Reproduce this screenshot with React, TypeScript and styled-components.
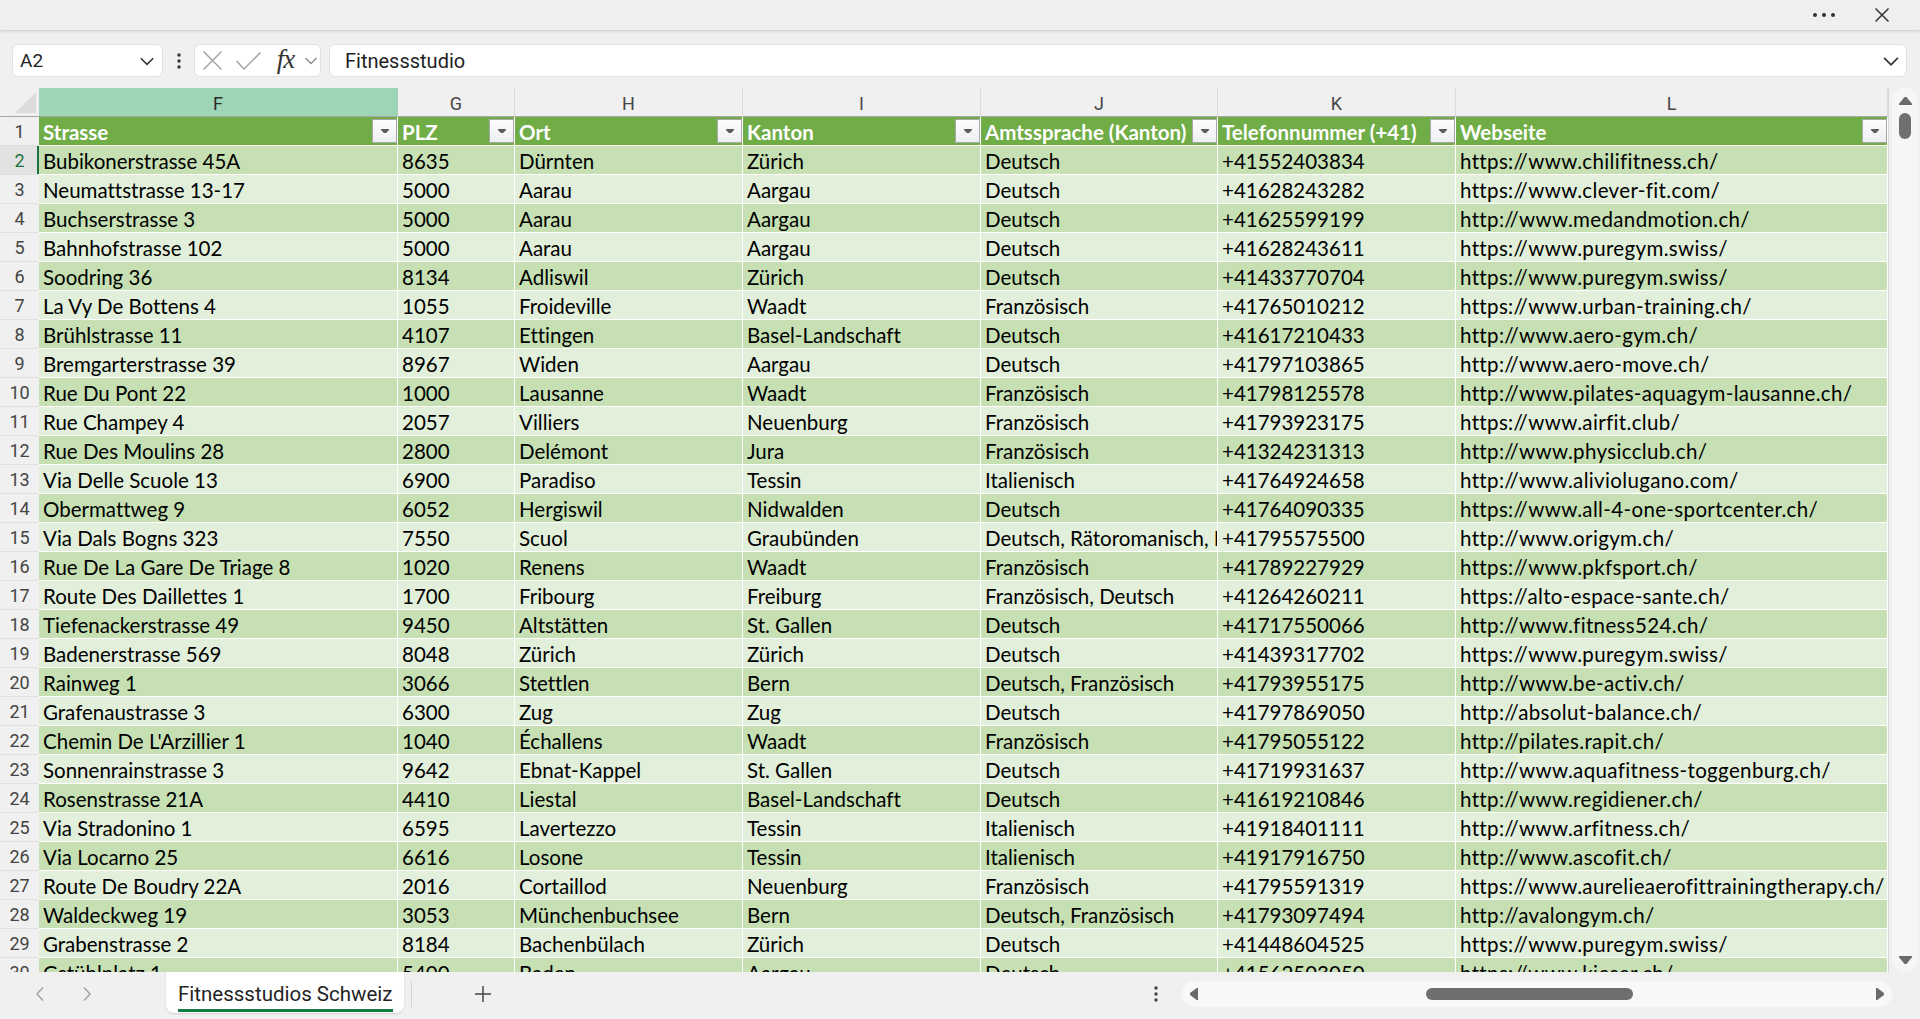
import React from "react";
import styled, { createGlobalStyle } from "styled-components";

const GlobalStyle = createGlobalStyle`
  html, body { margin: 0; padding: 0; background: #f0f0f0; overflow: hidden; }
  body { font-family: "Lato", "Liberation Sans", sans-serif; }
  * { box-sizing: border-box; }
`;

const COLS = "39px 359px 117px 228px 238px 237px 238px 432px";

const Page = styled.div`
  width: 1920px;
  height: 1019px;
  display: flex;
  flex-direction: column;
  background: #f0f0f0;
`;

const TitleBar = styled.div`
  height: 30px;
  flex: none;
  display: flex;
  justify-content: flex-end;
  align-items: center;
  padding-right: 30px;
  gap: 38px;
  background: #efefef;
  box-shadow: 0 1px 3px rgba(0, 0, 0, 0.18);
  position: relative;
  z-index: 1;
`;

const PlainIcon = styled.span`
  display: flex;
  align-items: center;
  justify-content: center;
  color: #333;
`;

const FormulaBar = styled.div`
  height: 58px;
  flex: none;
  display: flex;
  align-items: flex-start;
  padding: 14px 13px 0 12px;
`;

const Box = styled.div`
  height: 33px;
  background: #fff;
  border: 1px solid #e1e1e1;
  border-radius: 6px;
  display: flex;
  align-items: center;
`;

const NameBox = styled(Box)`
  width: 151px;
  justify-content: space-between;
  padding: 0 6px 0 7px;
`;

const UiText = styled.span<{ $size?: number }>`
  font-family: "Roboto", "Liberation Sans", sans-serif;
  font-size: ${(p) => p.$size ?? 19}px;
  color: #1f1f1f;
`;

const DotsButton = styled.div`
  width: 31px;
  height: 33px;
  display: flex;
  align-items: center;
  justify-content: center;
`;

const FxGroup = styled(Box)`
  width: 127px;
  padding-left: 0;
`;

const FxSlot = styled.span<{ $w: number }>`
  width: ${(p) => p.$w}px;
  flex: none;
  display: flex;
  align-items: center;
  justify-content: center;
`;

const FxText = styled.span`
  font-family: "Liberation Serif", "DejaVu Serif", serif;
  font-style: italic;
  font-size: 27px;
  color: #333;
  line-height: 1;
  letter-spacing: -1px;
  margin-top: -2px;
`;

const FormulaInput = styled(Box)`
  flex: 1;
  margin-left: 8px;
  justify-content: space-between;
  padding: 0 5px 0 15px;
`;

const SheetArea = styled.div`
  flex: 1;
  min-height: 0;
  display: flex;
`;

const Grid = styled.div`
  width: 1889px;
  flex: none;
  overflow: hidden;
  display: flex;
  flex-direction: column;
  border-right: 1px solid #d6d6d6;
`;

const Row = styled.div`
  display: grid;
  grid-template-columns: ${COLS};
  height: 29px;
  flex: none;
`;

const Corner = styled.div`
  background: #f0f0f0;
  border-bottom: 1px solid #a8a8a8;
  display: flex;
  align-items: flex-end;
  justify-content: flex-end;
  padding: 0 3px 3px 0;
`;

const ColHeader = styled.div<{ $selected?: boolean }>`
  display: flex;
  align-items: center;
  justify-content: center;
  font-family: "Roboto", "Liberation Sans", sans-serif;
  font-size: 18px;
  color: ${(p) => (p.$selected ? "#2b2b2b" : "#464646")};
  background: ${(p) => (p.$selected ? "#9fd5b7" : "#f0f0f0")};
  border-right: 1px solid ${(p) => (p.$selected ? "#9fd5b7" : "#dcdcdc")};
  border-bottom: 1px solid #a8a8a8;
  padding-top: 2px;
`;

const RowHeader = styled.div<{ $active?: boolean }>`
  display: flex;
  align-items: center;
  justify-content: center;
  font-family: "Roboto", "Liberation Sans", sans-serif;
  font-size: 18px;
  color: ${(p) => (p.$active ? "#1e7145" : "#444")};
  background: ${(p) => (p.$active ? "#e2e2e2" : "#f0f0f0")};
  border-bottom: 1px solid #e0e0e0;
  box-shadow: ${(p) => (p.$active ? "inset -2px 0 0 #1e7145" : "none")};
  padding-top: 1px;
`;

const Cell = styled.div<{ $band: "head" | "dark" | "light"; $spaced?: boolean }>`
  display: flex;
  align-items: center;
  min-width: 0;
  overflow: hidden;
  white-space: nowrap;
  padding: 1px 0 0 4px;
  font-size: 20.5px;
  font-variant-ligatures: none;
  letter-spacing: ${(p) => (p.$spaced ? "0.35px" : "0")};
  color: ${(p) => (p.$band === "head" ? "#fff" : "#000")};
  font-weight: ${(p) => (p.$band === "head" ? 700 : 400)};
  background: ${(p) =>
    p.$band === "head" ? "#70ad47" : p.$band === "dark" ? "#c6e0b4" : "#e2efda"};
  border-right: 1px solid #fff;
  border-bottom: 1px solid #fff;
`;

const HeadLabel = styled.span`
  flex: 1;
  min-width: 0;
  overflow: hidden;
`;

const FilterButton = styled.span`
  width: 25px;
  height: 24px;
  flex: none;
  margin: 0 0 1px 2px;
  display: flex;
  align-items: center;
  justify-content: center;
  background: linear-gradient(#fdfdfd, #eceef2);
  border: 1px solid #a9a9a9;
`;

const VScroll = styled.div`
  width: 26px;
  margin-left: 3px;
  background: #f6f6f6;
  border-radius: 13px;
  display: flex;
  flex-direction: column;
  align-items: center;
  padding: 9px 0 8px;
`;

const VThumb = styled.div`
  width: 12px;
  height: 26px;
  border-radius: 6px;
  background: #707070;
  margin-top: 8px;
`;

const Spacer = styled.div`
  flex: 1;
`;

const TabBar = styled.div`
  height: 47px;
  flex: none;
  display: flex;
  align-items: center;
  padding: 0 28px 3px 28px;
`;

const NavButton = styled.span`
  width: 24px;
  height: 24px;
  display: flex;
  align-items: center;
  justify-content: center;
  & + & {
    margin-left: 23px;
  }
`;

const SheetTab = styled.div`
  align-self: flex-start;
  height: 41px;
  margin-left: 67px;
  padding: 0 11px 0 12px;
  background: #fff;
  border-radius: 0 0 8px 8px;
  box-shadow: 0 1px 2px rgba(0, 0, 0, 0.14);
  display: flex;
  align-items: center;
`;

const TabLabel = styled.span`
  font-family: "Roboto", "Liberation Sans", sans-serif;
  font-size: 20.5px;
  color: #242424;
  padding: 4px 0 3px;
  border-bottom: 3px solid #107c41;
  margin-top: 4px;
  line-height: 24px;
`;

const TabDivider = styled.span`
  width: 1px;
  height: 26px;
  background: #d2d2d2;
  margin-left: 7px;
`;

const AddButton = styled.span`
  width: 30px;
  height: 30px;
  margin-left: 56px;
  display: flex;
  align-items: center;
  justify-content: center;
`;

const TabDots = styled.span`
  width: 26px;
  display: flex;
  justify-content: center;
  margin-right: 13px;
`;

const HScroll = styled.div`
  width: 710px;
  height: 26px;
  border-radius: 13px;
  background: #f8f8f8;
  display: flex;
  align-items: center;
  padding: 0 8px;
`;

const HTrack = styled.div`
  flex: 1;
  display: flex;
  align-items: center;
`;

const HThumb = styled.div<{ $offset: number; $len: number }>`
  height: 12px;
  width: ${(p) => p.$len}px;
  margin-left: ${(p) => p.$offset}px;
  border-radius: 6px;
  background: #6e6e6e;
`;

type Rec = [string, string, string, string, string, string, string];

const HEAD: Rec = [
  "Strasse",
  "PLZ",
  "Ort",
  "Kanton",
  "Amtssprache (Kanton)",
  "Telefonnummer (+41)",
  "Webseite",
];

const DATA: Rec[] = [
  ["Bubikonerstrasse 45A", "8635", "Dürnten", "Zürich", "Deutsch", "+41552403834", "https://www.chilifitness.ch/"],
  ["Neumattstrasse 13-17", "5000", "Aarau", "Aargau", "Deutsch", "+41628243282", "https://www.clever-fit.com/"],
  ["Buchserstrasse 3", "5000", "Aarau", "Aargau", "Deutsch", "+41625599199", "http://www.medandmotion.ch/"],
  ["Bahnhofstrasse 102", "5000", "Aarau", "Aargau", "Deutsch", "+41628243611", "https://www.puregym.swiss/"],
  ["Soodring 36", "8134", "Adliswil", "Zürich", "Deutsch", "+41433770704", "https://www.puregym.swiss/"],
  ["La Vy De Bottens 4", "1055", "Froideville", "Waadt", "Französisch", "+41765010212", "https://www.urban-training.ch/"],
  ["Brühlstrasse 11", "4107", "Ettingen", "Basel-Landschaft", "Deutsch", "+41617210433", "http://www.aero-gym.ch/"],
  ["Bremgarterstrasse 39", "8967", "Widen", "Aargau", "Deutsch", "+41797103865", "http://www.aero-move.ch/"],
  ["Rue Du Pont 22", "1000", "Lausanne", "Waadt", "Französisch", "+41798125578", "http://www.pilates-aquagym-lausanne.ch/"],
  ["Rue Champey 4", "2057", "Villiers", "Neuenburg", "Französisch", "+41793923175", "https://www.airfit.club/"],
  ["Rue Des Moulins 28", "2800", "Delémont", "Jura", "Französisch", "+41324231313", "http://www.physicclub.ch/"],
  ["Via Delle Scuole 13", "6900", "Paradiso", "Tessin", "Italienisch", "+41764924658", "http://www.aliviolugano.com/"],
  ["Obermattweg 9", "6052", "Hergiswil", "Nidwalden", "Deutsch", "+41764090335", "https://www.all-4-one-sportcenter.ch/"],
  ["Via Dals Bogns 323", "7550", "Scuol", "Graubünden", "Deutsch, Rätoromanisch, Italienisch", "+41795575500", "http://www.origym.ch/"],
  ["Rue De La Gare De Triage 8", "1020", "Renens", "Waadt", "Französisch", "+41789227929", "https://www.pkfsport.ch/"],
  ["Route Des Daillettes 1", "1700", "Fribourg", "Freiburg", "Französisch, Deutsch", "+41264260211", "https://alto-espace-sante.ch/"],
  ["Tiefenackerstrasse 49", "9450", "Altstätten", "St. Gallen", "Deutsch", "+41717550066", "http://www.fitness524.ch/"],
  ["Badenerstrasse 569", "8048", "Zürich", "Zürich", "Deutsch", "+41439317702", "https://www.puregym.swiss/"],
  ["Rainweg 1", "3066", "Stettlen", "Bern", "Deutsch, Französisch", "+41793955175", "http://www.be-activ.ch/"],
  ["Grafenaustrasse 3", "6300", "Zug", "Zug", "Deutsch", "+41797869050", "http://absolut-balance.ch/"],
  ["Chemin De L'Arzillier 1", "1040", "Échallens", "Waadt", "Französisch", "+41795055122", "http://pilates.rapit.ch/"],
  ["Sonnenrainstrasse 3", "9642", "Ebnat-Kappel", "St. Gallen", "Deutsch", "+41719931637", "http://www.aquafitness-toggenburg.ch/"],
  ["Rosenstrasse 21A", "4410", "Liestal", "Basel-Landschaft", "Deutsch", "+41619210846", "http://www.regidiener.ch/"],
  ["Via Stradonino 1", "6595", "Lavertezzo", "Tessin", "Italienisch", "+41918401111", "http://www.arfitness.ch/"],
  ["Via Locarno 25", "6616", "Losone", "Tessin", "Italienisch", "+41917916750", "http://www.ascofit.ch/"],
  ["Route De Boudry 22A", "2016", "Cortaillod", "Neuenburg", "Französisch", "+41795591319", "https://www.aurelieaerofittrainingtherapy.ch/"],
  ["Waldeckweg 19", "3053", "Münchenbuchsee", "Bern", "Deutsch, Französisch", "+41793097494", "http://avalongym.ch/"],
  ["Grabenstrasse 2", "8184", "Bachenbülach", "Zürich", "Deutsch", "+41448604525", "https://www.puregym.swiss/"],
  ["Gstühlplatz 1", "5400", "Baden", "Aargau", "Deutsch", "+41562503050", "https://www.kieser.ch/"],
];

const LETTERS = ["F", "G", "H", "I", "J", "K", "L"];

const Chevron = ({ size = 14, color = "#333", w = 1.4 }: { size?: number; color?: string; w?: number }) => (
  <svg width={size} height={size} viewBox="0 0 16 16">
    <polyline points="2.5,5.5 8,11 13.5,5.5" fill="none" stroke={color} strokeWidth={w} />
  </svg>
);

const Tri = ({ dir, w, h, color }: { dir: "up" | "down" | "left" | "right"; w: number; h: number; color: string }) => {
  const pts =
    dir === "up"
      ? `0,${h} ${w / 2},0 ${w},${h}`
      : dir === "down"
      ? `0,0 ${w},0 ${w / 2},${h}`
      : dir === "left"
      ? `${w},0 0,${h / 2} ${w},${h}`
      : `0,0 ${w},${h / 2} 0,${h}`;
  return (
    <svg width={w} height={h} viewBox={`0 0 ${w} ${h}`}>
      <polygon points={pts} fill={color} strokeLinejoin="round" stroke={color} strokeWidth={1.5} />
    </svg>
  );
};

const VDots = ({ color = "#333" }: { color?: string }) => (
  <svg width="6" height="18" viewBox="0 0 6 18">
    <circle cx="3" cy="3" r="1.7" fill={color} />
    <circle cx="3" cy="9" r="1.7" fill={color} />
    <circle cx="3" cy="15" r="1.7" fill={color} />
  </svg>
);

export default function App() {
  return (
    <Page>
      <GlobalStyle />
      <TitleBar>
        <PlainIcon>
          <svg width="24" height="6" viewBox="0 0 24 6">
            <circle cx="3" cy="3" r="2" fill="#333" />
            <circle cx="12" cy="3" r="2" fill="#333" />
            <circle cx="21" cy="3" r="2" fill="#333" />
          </svg>
        </PlainIcon>
        <PlainIcon>
          <svg width="16" height="16" viewBox="0 0 16 16">
            <path d="M1.5 1.5 L14.5 14.5 M14.5 1.5 L1.5 14.5" stroke="#333" strokeWidth="1.5" />
          </svg>
        </PlainIcon>
      </TitleBar>

      <FormulaBar>
        <NameBox>
          <UiText>A2</UiText>
          <Chevron size={18} />
        </NameBox>
        <DotsButton>
          <VDots />
        </DotsButton>
        <FxGroup>
          <FxSlot $w={34}>
            <svg width="21" height="21" viewBox="0 0 21 21">
              <path d="M1.5 1.5 L19.5 19.5 M19.5 1.5 L1.5 19.5" stroke="#a3a3a3" strokeWidth="1.5" />
            </svg>
          </FxSlot>
          <FxSlot $w={39}>
            <svg width="27" height="20" viewBox="0 0 27 20">
              <polyline points="1.5,10 9,18 25.5,1.5" fill="none" stroke="#a3a3a3" strokeWidth="1.5" />
            </svg>
          </FxSlot>
          <FxSlot $w={35}>
            <FxText>fx</FxText>
          </FxSlot>
          <FxSlot $w={16}>
            <Chevron size={17} color="#8a8a8a" w={1.3} />
          </FxSlot>
        </FxGroup>
        <FormulaInput>
          <UiText $size={20}>Fitnessstudio</UiText>
          <Chevron size={20} />
        </FormulaInput>
      </FormulaBar>

      <SheetArea>
        <Grid>
          <Row>
            <Corner>
              <svg width="21" height="21" viewBox="0 0 21 21">
                <polygon points="21,0 21,21 0,21" fill="#dcdcdc" />
              </svg>
            </Corner>
            {LETTERS.map((l, i) => (
              <ColHeader key={l} $selected={i === 0}>
                {l}
              </ColHeader>
            ))}
          </Row>
          <Row>
            <RowHeader>1</RowHeader>
            {HEAD.map((h) => (
              <Cell key={h} $band="head">
                <HeadLabel>{h}</HeadLabel>
                <FilterButton>
                  <Tri dir="down" w={8} h={4} color="#5c5c5c" />
                </FilterButton>
              </Cell>
            ))}
          </Row>
          {DATA.map((r, idx) => {
            const n = idx + 2;
            const band = n % 2 === 0 ? "dark" : "light";
            return (
              <Row key={n}>
                <RowHeader $active={n === 2}>{n}</RowHeader>
                {r.map((v, j) => (
                  <Cell key={j} $band={band} $spaced={j === 6}>
                    {v}
                  </Cell>
                ))}
              </Row>
            );
          })}
        </Grid>
        <VScroll>
          <Tri dir="up" w={13} h={8} color="#6b6b6b" />
          <VThumb />
          <Spacer />
          <Tri dir="down" w={13} h={8} color="#6b6b6b" />
        </VScroll>
      </SheetArea>

      <TabBar>
        <NavButton>
          <svg width="10" height="16" viewBox="0 0 10 16">
            <polyline points="8,1.5 2,8 8,14.5" fill="none" stroke="#a0a0a0" strokeWidth="1.4" />
          </svg>
        </NavButton>
        <NavButton>
          <svg width="10" height="16" viewBox="0 0 10 16">
            <polyline points="2,1.5 8,8 2,14.5" fill="none" stroke="#a0a0a0" strokeWidth="1.4" />
          </svg>
        </NavButton>
        <SheetTab>
          <TabLabel>Fitnessstudios Schweiz</TabLabel>
        </SheetTab>
        <TabDivider />
        <AddButton>
          <svg width="18" height="18" viewBox="0 0 18 18">
            <path d="M9 1 V17 M1 9 H17" stroke="#444" strokeWidth="1.5" />
          </svg>
        </AddButton>
        <Spacer />
        <TabDots>
          <VDots color="#444" />
        </TabDots>
        <HScroll>
          <Tri dir="left" w={8} h={12} color="#6b6b6b" />
          <HTrack>
            <HThumb $offset={228} $len={207} />
          </HTrack>
          <Tri dir="right" w={8} h={12} color="#6b6b6b" />
        </HScroll>
      </TabBar>
    </Page>
  );
}
